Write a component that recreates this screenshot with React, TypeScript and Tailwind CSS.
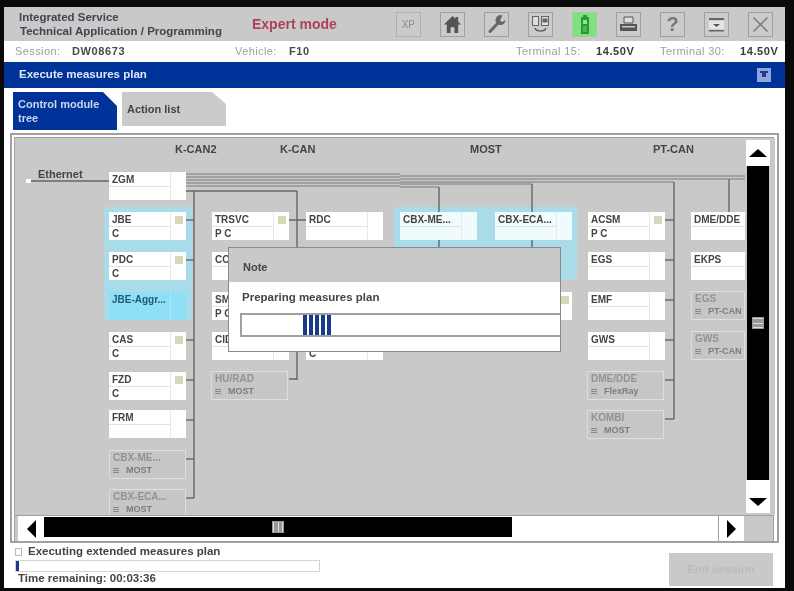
import React from "react";

type N = { x: number; y: number; w?: number; t: string; s?: string; sq?: boolean; ghost?: string; aq?: boolean; tint?: boolean; noCell?: boolean };

const OX = 15;
const OY = 139;

const nodes: N[] = [
  { x: 109, y: 173, t: "ZGM" },
  { x: 109, y: 213, t: "JBE", s: "C", sq: true },
  { x: 109, y: 253, t: "PDC", s: "C", sq: true },
  { x: 109, y: 293, t: "JBE-Aggr...", aq: true },
  { x: 109, y: 333, t: "CAS", s: "C", sq: true },
  { x: 109, y: 373, t: "FZD", s: "C", sq: true },
  { x: 109, y: 411, t: "FRM" },
  { x: 109, y: 451, t: "CBX-ME...", ghost: "MOST" },
  { x: 109, y: 490, t: "CBX-ECA...", ghost: "MOST" },
  { x: 212, y: 213, t: "TRSVC", s: "P C", sq: true },
  { x: 212, y: 253, t: "CO" },
  { x: 212, y: 293, t: "SM", s: "P C" },
  { x: 212, y: 333, t: "CID" },
  { x: 211, y: 372, t: "HU/RAD", ghost: "MOST" },
  { x: 306, y: 213, t: "RDC" },
  { x: 306, y: 333, t: "", s: "C" },
  { x: 400, y: 213, t: "CBX-ME...", tint: true },
  { x: 495, y: 213, t: "CBX-ECA...", tint: true },
  { x: 495, y: 293, t: "", sq: true },
  { x: 588, y: 213, t: "ACSM", s: "P C", sq: true },
  { x: 588, y: 253, t: "EGS" },
  { x: 588, y: 293, t: "EMF" },
  { x: 588, y: 333, t: "GWS" },
  { x: 587, y: 372, t: "DME/DDE", ghost: "FlexRay" },
  { x: 587, y: 411, t: "KOMBI", ghost: "MOST" },
  { x: 691, y: 213, t: "DME/DDE", w: 54, noCell: true },
  { x: 691, y: 253, t: "EKPS", w: 54, noCell: true },
  { x: 691, y: 292, t: "EGS", w: 54, ghost: "PT-CAN" },
  { x: 691, y: 332, t: "GWS", w: 54, ghost: "PT-CAN" },
];

const Lines = () => {
  const ys1 = [221, 261, 341, 381, 421, 460, 499];
  const ys2 = [261, 301, 341];
  const ys3 = [221, 261, 301, 341, 381, 420];
  const c = "#666666";
  return (
    <svg className="absolute left-0 top-0" width="730" height="376" viewBox={`${OX} ${OY} 730 376`}>
      <g stroke="#7a7a7a" strokeWidth="1.2" fill="none">
        {[175, 178, 181, 184, 187].map((y) => (
          <path key={y} d={`M186 ${y}H400`} />
        ))}
        <path d="M400 177H745M400 180H745M400 183H674M400 185H532M400 188H439" />
      </g>
      <g stroke={c} strokeWidth="1.4" fill="none">
        <path d="M30 182H109" />
        <path d="M186 192H297M194 192V499M297 192V381M674 183V420M729 180V213M439 188V248M532 185V248" />
        {ys1.map((y) => (
          <path key={y} d={`M186 ${y}H194`} />
        ))}
        {ys2.map((y) => (
          <path key={y} d={`M288 ${y}H297`} />
        ))}
        <path d="M288 221H306M289 380H297" />
        {ys3.map((y) => (
          <path key={y} d={`M665 ${y}H674`} />
        ))}
      </g>
      <rect x="26" y="180" width="5" height="4" fill="#fff" />
    </svg>
  );
};

const Node = ({ n }: { n: N }) => {
  const style = { left: n.x - OX, top: n.y - OY, width: n.w ?? 77 };
  if (n.ghost) {
    return (
      <div className="absolute h-[29px] bg-[#dedede] p-px" style={style}>
        <div className="h-full bg-[#c6c6c6] pl-[3px] text-[10px] font-bold leading-[13px] text-[#929292]">
          <div className="whitespace-nowrap">{n.t}</div>
          <div className="flex items-center gap-[7px] text-[#7c7c7c]">
            <span className="flex w-[6px] flex-col gap-[1px]">
              <span className="h-px bg-[#888]" />
              <span className="h-px bg-[#888]" />
              <span className="h-px bg-[#888]" />
            </span>
            <span className="text-[9px] font-bold">{n.ghost}</span>
          </div>
        </div>
      </div>
    );
  }
  return (
    <div
      className={`absolute flex h-[28px] ${n.aq ? "bg-[#8fe0f5]" : n.tint ? "bg-[#f0fbfd]" : "bg-white"}`}
      style={style}
    >
      <div className="flex min-w-0 flex-1 flex-col">
        <div className={`h-[14px] whitespace-nowrap pl-[3px] text-[10px] font-bold leading-[16px] ${n.aq ? "text-[#1f5a7a]" : "text-[#444]"}`}>
          {n.t}
        </div>
        <div className={`h-px shrink-0 ${n.aq ? "bg-[#8fe0f5]" : "bg-[#e2e2e2]"}`} />
        <div className="pl-[3px] text-[10px] font-bold leading-[13px] text-[#444]">{n.s}</div>
      </div>
      {!n.noCell && (
        <>
          <div className={`w-px shrink-0 ${n.aq ? "bg-[#a8e8f8]" : "bg-[#e8e8e8]"}`} />
          <div className="flex w-[15px] shrink-0 justify-center pt-[4px]">
            {n.sq && <div className="h-[8px] w-[8px] bg-[#d8d8b8]" />}
          </div>
        </>
      )}
    </div>
  );
};

const IconBtn = ({ children, green }: { children: React.ReactNode; green?: boolean }) => (
  <div className={`h-[25px] w-[25px] p-px ${green ? "bg-[#9fd09f]" : "bg-[#a0a0a0]"}`}>
    <div className={`flex h-full w-full items-center justify-center ${green ? "bg-[#7fe07f]" : "bg-[#cbcbcb]"}`}>{children}</div>
  </div>
);

const Bus = ({ x, t }: { x: number; t: string }) => (
  <div className="absolute top-[5px] text-[11px] font-bold leading-[12px] text-[#444]" style={{ left: x - OX }}>
    {t}
  </div>
);

export default function App() {
  return (
    <div className="h-[591px] w-[794px] overflow-hidden bg-[#0a0a0a] pl-1 pr-[9px] pt-[7px] pb-[3px] font-['Liberation_Sans',Arial,sans-serif] blur-[0.6px]">
      <div className="flex h-full flex-col bg-white">
        {/* header */}
        <div className="flex h-[34px] shrink-0 items-center bg-[#c9c9c9] pl-[15px] pr-[12px]">
          <div className="w-[233px] text-[11.5px] font-bold leading-[14px] text-[#444450]">
            <div>Integrated Service</div>
            <div className="pl-px">Technical Application / Programming</div>
          </div>
          <div className="text-[14px] font-bold text-[#b0405a]">Expert mode</div>
          <div className="ml-[59px] h-[25px] w-[25px] bg-[#b0b0b0] p-px">
            <div className="flex h-full w-full items-center justify-center bg-[#cbcbcb] text-[10px] text-[#8c8c8c]">XP</div>
          </div>
          <div className="ml-auto flex gap-[19px]">
            <IconBtn>
              <svg width="19" height="19" viewBox="0 0 20 20" fill="#555">
                <path d="M10 1 1 10h3v9h4v-6h4v6h4v-9h3l-3-3V2h-3v2z" />
              </svg>
            </IconBtn>
            <IconBtn>
              <svg width="20" height="20" viewBox="0 0 20 20" fill="#666">
                <path d="M3 17.500 11 9" stroke="#666" strokeWidth="3" strokeLinecap="round" />
                <path d="M15.500 1.500A5 5 0 1 0 18.500 6L15 8 13 6.500z" />
              </svg>
            </IconBtn>
            <IconBtn>
              <svg width="21" height="20" viewBox="0 0 21 20" fill="none" stroke="#666">
                <rect x="2.500" y="2.500" width="6" height="9" fill="#ddd" />
                <rect x="11.500" y="2.500" width="7" height="9" fill="#ddd" />
                <rect x="13" y="5" width="4" height="3" fill="#666" />
                <path d="M5 14c1 4 10 4 11 0" strokeWidth="1.500" />
              </svg>
            </IconBtn>
            <IconBtn green>
              <svg width="14" height="21" viewBox="0 0 14 21">
                <path d="M5 1h4v2h2v17H3V3h2z" fill="#2c9a3c" />
                <rect x="5" y="6" width="4" height="4" fill="#8ce88c" />
                <rect x="5" y="12" width="4" height="6" fill="#46b856" />
              </svg>
            </IconBtn>
            <IconBtn>
              <svg width="21" height="19" viewBox="0 0 21 19" fill="#555">
                <path d="M6 2h9v6H6z" fill="#ddd" stroke="#555" />
                <path d="M2 9h17v7H2z" />
                <path d="M4 11h13v1.500H4z" fill="#ccc" />
              </svg>
            </IconBtn>
            <IconBtn>
              <span className="text-[20px] font-bold leading-none text-[#777]">?</span>
            </IconBtn>
            <IconBtn>
              <svg width="19" height="19" viewBox="0 0 19 19">
                <path d="M2 3h15v2H2zM2 15h15v1.500H2z" fill="#666" />
                <rect x="2" y="6" width="15" height="8" fill="#e4e4e4" />
                <path d="M6 9h7l-3.500 3z" fill="#555" />
              </svg>
            </IconBtn>
            <IconBtn>
              <svg width="19" height="19" viewBox="0 0 19 19" stroke="#777" strokeWidth="1.400">
                <path d="M2.500 2.500l14 14M16.500 2.500l-14 14" />
              </svg>
            </IconBtn>
          </div>
        </div>

        {/* session row */}
        <div className="flex h-[21px] shrink-0 items-center whitespace-nowrap pl-[11px] text-[11px] leading-none tracking-[0.4px] text-[#9e9e9e]">
          <span className="w-[57px]">Session:</span>
          <span className="w-[163px] font-bold tracking-[0.6px] text-[#4a4a4a]">DW08673</span>
          <span className="w-[54px]">Vehicle:</span>
          <span className="w-[227px] font-bold tracking-[0.6px] text-[#4a4a4a]">F10</span>
          <span className="w-[80px]">Terminal 15:</span>
          <span className="w-[64px] font-bold tracking-[0.6px] text-[#3a3a3a]">14.50V</span>
          <span className="w-[80px]">Terminal 30:</span>
          <span className="font-bold tracking-[0.6px] text-[#3a3a3a]">14.50V</span>
        </div>

        {/* blue bar */}
        <div className="flex h-[26px] shrink-0 items-center justify-between bg-[#003399] pl-[15px] pr-[14px]">
          <span className="text-[11.5px] font-bold text-[#dfe6f5]">Execute measures plan</span>
          <div className="flex h-[14px] w-[14px] flex-col items-center bg-[#8ea6dc] pt-[3px]">
            <div className="h-[2px] w-[8px] bg-[#1c3c90]" />
            <div className="h-[4px] w-[4px] bg-[#1c3c90]" />
          </div>
        </div>

        {/* tabs */}
        <div className="flex h-[45px] shrink-0 items-start gap-[5px] pl-[9px] pt-1">
          <div className="flex h-[38px] w-[104px] items-center bg-[#003399] pl-[5px] text-[11px] font-bold leading-[14px] text-[#c9d6ee] [clip-path:polygon(0_0,90px_0,100%_14px,100%_100%,0_100%)]">
            Control module
            <br />
            tree
          </div>
          <div className="flex h-[34px] w-[104px] items-center bg-[#cacaca] pl-[5px] text-[11px] font-bold text-[#444] [clip-path:polygon(0_0,90px_0,100%_12px,100%_100%,0_100%)]">
            Action list
          </div>
        </div>

        {/* panel */}
        <div className="mx-[6px] h-[410px] shrink-0 bg-[#a0a0a0] p-[2px]">
          <div className="flex h-full flex-col bg-white pl-[2px] pr-[3px] pt-[2px]">
            <div className="flex min-h-0 flex-1 flex-col bg-[#a0a0a0] px-px pt-px">
              <div className="flex min-h-0 flex-1 bg-[#c9c9c9]">
                <div className="relative w-[730px] shrink-0 overflow-hidden bg-[#c9c9c9]">
                  <div className="absolute h-[113px] w-[88px] bg-[#a9dce8]" style={{ left: 104 - OX, top: 208 - OY }} />
                  <div className="absolute h-[73px] w-[183px] bg-[#a9dce8]" style={{ left: 394 - OX, top: 208 - OY }} />
                  <Lines />
                  <div className="absolute text-[11px] font-bold text-[#444]" style={{ left: 38 - OX, top: 167 - OY }}>
                    Ethernet
                  </div>
                  <Bus x={175} t="K-CAN2" />
                  <Bus x={280} t="K-CAN" />
                  <Bus x={470} t="MOST" />
                  <Bus x={653} t="PT-CAN" />
                  {nodes.map((n, i) => (
                    <Node key={i} n={n} />
                  ))}
                  {/* dialog */}
                  <div className="absolute h-[105px] w-[333px] bg-[#8a8a8a] p-px" style={{ left: 228 - OX, top: 248 - OY }}>
                    <div className="flex h-full flex-col bg-white">
                      <div className="flex h-[34px] shrink-0 items-center bg-[#c9c9c9] pl-[14px] pt-[4px] text-[11px] font-bold text-[#444]">Note</div>
                      <div className="pl-[13px] pt-[9px] text-[11.5px] font-bold leading-[13px] text-[#444]">Preparing measures plan</div>
                      <div className="ml-[11px] mt-[9px] h-[24px] flex-none bg-[#a0a0a0] py-[2px] pl-[2px]">
                        <div className="relative h-full bg-white">
                          <div className="absolute left-[61px] top-0 flex h-[20px] gap-[2px]">
                            {[0, 1, 2, 3, 4].map((i) => (
                              <div key={i} className="h-full w-[4px] bg-[#1a3a8c]" />
                            ))}
                          </div>
                        </div>
                      </div>
                    </div>
                  </div>
                </div>
                {/* vertical scrollbar */}
                <div className="flex w-[25px] shrink-0 flex-col items-center bg-[#c9c9c9] pb-[2px] pt-[2px]">
                  <div className="flex h-[26px] w-[24px] shrink-0 items-center justify-center bg-white">
                    <div className="h-0 w-0 border-x-[9px] border-b-[8px] border-x-transparent border-b-black" />
                  </div>
                  <div className="flex w-[22px] flex-1 items-center justify-center bg-black">
                    <div className="flex h-[12px] w-[12px] flex-col justify-between bg-[#999] p-px">
                      <div className="h-px bg-[#ddd]" />
                      <div className="h-px bg-[#ddd]" />
                      <div className="h-px bg-[#ddd]" />
                    </div>
                  </div>
                  <div className="flex h-[33px] w-[24px] shrink-0 items-end justify-center bg-white pb-[7px]">
                    <div className="h-0 w-0 border-x-[9px] border-t-[8px] border-x-transparent border-t-black" />
                  </div>
                </div>
                <div className="w-[5px] shrink-0 bg-[#c9c9c9]" />
              </div>
              {/* horizontal scrollbar */}
              <div className="h-px shrink-0 bg-[#a0a0a0]" />
              <div className="flex h-[25px] shrink-0 bg-[#c9c9c9] pl-[3px]">
                <div className="flex w-[26px] shrink-0 items-center justify-center bg-white">
                  <div className="h-0 w-0 border-y-[9px] border-r-[9px] border-y-transparent border-r-black" />
                </div>
                <div className="w-[468px] shrink-0 bg-white pt-[1px]">
                  <div className="flex h-[20px] items-center justify-center bg-black">
                    <div className="flex h-[12px] w-[12px] justify-between bg-[#999] p-px">
                      <div className="w-px bg-[#ddd]" />
                      <div className="w-px bg-[#ddd]" />
                      <div className="w-px bg-[#ddd]" />
                    </div>
                  </div>
                </div>
                <div className="w-[206px] shrink-0 bg-white" />
                <div className="w-px shrink-0 bg-[#a0a0a0]" />
                <div className="flex w-[25px] shrink-0 items-center justify-center bg-white">
                  <div className="h-0 w-0 border-y-[9px] border-l-[9px] border-y-transparent border-l-black" />
                </div>
              </div>
            </div>
          </div>
        </div>

        {/* footer */}
        <div className="relative flex min-h-0 flex-1 items-start pl-[11px] pt-[2px]">
          <div className="w-[306px]">
            <div className="flex h-[13px] items-center gap-[6px]">
              <div className="flex h-[8px] w-[7px] justify-center bg-[#bbb] p-px">
                <div className="w-full bg-white" />
              </div>
              <span className="text-[11.5px] font-bold leading-none text-[#444]">Executing extended measures plan</span>
            </div>
            <div className="mt-[2px] h-[12px] w-[305px] bg-[#d4d4d4] p-px">
              <div className="h-full bg-white">
                <div className="h-full w-[3px] bg-[#1a3a8c]" />
              </div>
            </div>
            <div className="pl-[3px] text-[11.5px] font-bold leading-[13px] text-[#444]">Time remaining: 00:03:36</div>
          </div>
          <div className="ml-auto mr-[12px] mt-[8px] flex h-[33px] w-[104px] items-center justify-center bg-[#c9c9c9] text-[11.5px] font-bold text-[#bcbcbc]">
            End session
          </div>
        </div>
      </div>
    </div>
  );
}
